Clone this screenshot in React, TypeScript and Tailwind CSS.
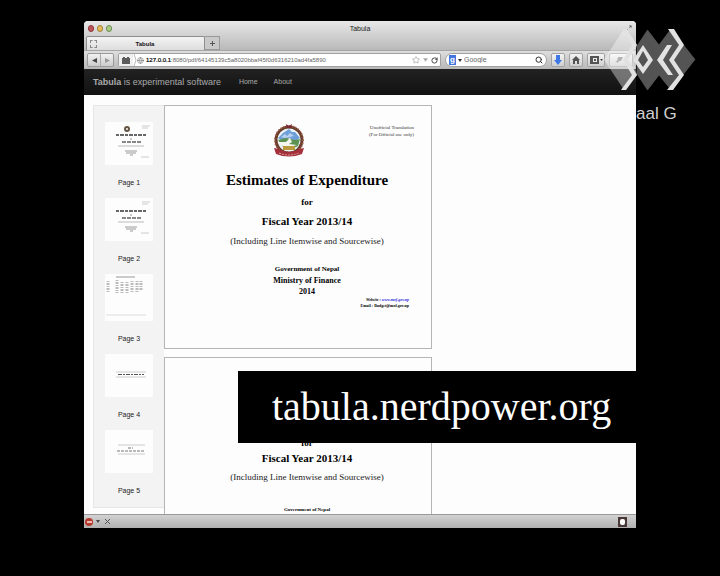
import React from "react";
import { Star, RotateCw, Search, Globe } from "lucide-react";

const SANS = "font-['Liberation_Sans',Arial,sans-serif]";
const SERIF = "font-['Liberation_Serif','Times_New_Roman',serif]";
const TOOL_BUTTON =
  "flex h-[14px] items-center justify-center gap-px rounded-xs border border-[#a3a3a3] bg-linear-to-b from-[#f4f4f4] to-[#cfcfcf]";

function Emblem() {
  return (
    <svg viewBox="0 0 32 34" className="h-[34px] w-8" aria-label="Emblem of Nepal">
      <circle cx="16" cy="16" r="12" fill="#eef3f8" />
      <path d="M5 14 L10 9 L13 7 L16 5 L19 8 L22 8 L27 14 L22 17 L16 14 L9 17Z" fill="#6f9fd8" />
      <path d="M8 13 L12 10 L14 12 L17 9 L21 12 L17 13 L12 14Z" fill="#b9d0ee" />
      <path d="M5 16 L13 14 L22 16 L27 15 L25 22 L19 25 L10 23Z" fill="#5c9350" />
      <path d="M5 18 L13 18 L17 14 L19 18 L16 20 L24 21 L13 24 L8 21Z" fill="#f4f6ee" />
      <rect x="10" y="22" width="12" height="4" fill="#b99a3c" />
      <circle cx="16" cy="16" r="13" fill="none" stroke="#6c3b2c" strokeWidth="3" />
      <circle cx="16" cy="16" r="14" fill="none" stroke="#a0604e" strokeWidth="2" strokeDasharray="1 2" />
      <circle cx="16" cy="16" r="12" fill="none" stroke="#4b5a2a" strokeWidth="1" strokeDasharray="1 3" />
      <path d="M1 24 L6 25 Q16 31 26 25 L31 24 L29 30 Q16 35 3 30Z" fill="#a3303a" />
      <path d="M6 29 Q16 33 26 29" fill="none" stroke="#d9a0a0" strokeWidth="1" strokeDasharray="2 1" />
      <path d="M13 0 L16 2 L19 0 L18 4 L14 4Z" fill="#7a2430" />
    </svg>
  );
}

function TabBar() {
  return (
    <header className="shrink-0 rounded-t-sm bg-linear-to-b from-[#e8e8e8] to-[#b9b9b9]">
      <div className="grid h-[15px] grid-cols-3 items-center px-1">
        <div className="flex gap-[3px]">
          <button aria-label="Close" className="h-[7px] w-[6px] rounded-full border border-[#8a3a3c] bg-[#c05458]" />
          <button aria-label="Minimise" className="h-[7px] w-[6px] rounded-full border border-[#a08038] bg-[#e6bd5c]" />
          <button aria-label="Zoom" className="h-[7px] w-[6px] rounded-full border border-[#6b8f50] bg-[#a9cb84]" />
        </div>
        <h1 className="text-center text-[7px] leading-[10px] text-[#222]">Tabula</h1>
        <button aria-label="Full screen" className="justify-self-end text-[#555]">
          <svg viewBox="0 0 8 8" className="size-[7px]" stroke="currentColor" fill="none">
            <path d="M5 1h2v2M7 1L5 3M1 5v2h2M1 7l2-2" />
          </svg>
        </button>
      </div>
      <div className="flex h-[14px] items-stretch pl-[2px]">
        <div className="flex w-[119px] items-center rounded-t-xs border border-b-0 border-[#8e8e8e] bg-linear-to-b from-[#f3f3f3] to-[#dddddd] px-[3px]">
          <span className="h-2 w-[7px] border border-dashed border-[#888]" />
          <span className="flex-1 pr-2 text-center text-[6px] leading-[8px] font-bold text-[#111]">Tabula</span>
        </div>
        <button aria-label="New tab" className="flex w-[15px] items-center justify-center border border-l-0 border-[#9a9a9a] bg-[#c9c9c9] text-[#555]">
          <svg viewBox="0 0 7 7" className="size-[7px]" stroke="currentColor"><path d="M3.5 1v5M1 3.500h5" /></svg>
        </button>
      </div>
    </header>
  );
}

function Toolbar() {
  return (
    <div className="flex h-[19px] shrink-0 items-center gap-1 border-t border-[#a5a5a5] bg-linear-to-b from-[#dedede] to-[#b8b8b8] px-[3px]">
      <div className="flex h-[14px] w-[27px] rounded-xs border border-[#9a9a9a] bg-linear-to-b from-[#f2f2f2] to-[#cccccc]">
        <button aria-label="Back" className="flex flex-1 items-center justify-center border-r border-[#aaa]">
          <svg viewBox="0 0 6 6" className="size-[5px]" fill="#444"><path d="M6 0v6L0 3z" /></svg>
        </button>
        <button aria-label="Forward" className="flex flex-1 items-center justify-center">
          <svg viewBox="0 0 6 6" className="size-[5px]" fill="#999"><path d="M0 0v6L6 3z" /></svg>
        </button>
      </div>
      <div className="flex h-[14px] min-w-0 flex-1 items-center rounded-xs border border-[#a0a0a0] bg-white pr-[2px]">
        <span className="flex h-full w-[14px] items-center justify-center bg-[#f0f0f0]">
          <svg viewBox="0 0 8 8" className="size-2" fill="#5c5c5c"><path d="M1 1h2v1h2V1h2v1h1v6H0V2h1z" /></svg>
        </span>
        <svg viewBox="0 0 4 12" className="h-3 w-1" fill="none" stroke="#bbb"><path d="M1 0l2 6-2 6" /></svg>
        <Globe className="mr-[2px] size-[7px] text-[#777]" />
        <label htmlFor="url" className="text-[6px] leading-[10px] text-black [-webkit-text-stroke:0.2px_black]">127.0.0.1</label>
        <input
          id="url"
          className="min-w-0 flex-1 text-[6px] leading-[10px] text-[#666] outline-none"
          defaultValue=":8080/pdf/64145139c5a8020bbaf45f0d6316210ad4fa5890"
        />
        <div className="flex items-center gap-[3px]">
          <Star className="size-2 text-[#999]" />
          <svg viewBox="0 0 6 4" className="h-1 w-[5px]" fill="#aaa"><path d="M0 0h6L3 4z" /></svg>
          <RotateCw className="size-[7px] text-[#333]" strokeWidth={3} />
        </div>
      </div>
      <div className="flex h-[14px] w-[102px] items-center gap-[2px] rounded-full border border-[#a0a0a0] bg-white px-[3px]">
        <span className="flex h-[10px] w-[7px] items-center justify-center bg-[#4474dd] text-[8px] leading-[8px] font-bold text-white">g</span>
        <svg viewBox="0 0 4 3" className="h-[3px] w-1" fill="#333"><path d="M0 0h4L2 3z" /></svg>
        <input aria-label="Search" placeholder="Google" className="min-w-0 flex-1 text-[7px] leading-[10px] outline-none placeholder:text-[#666]" />
        <Search className="size-2 text-[#333]" strokeWidth={3} />
      </div>
      <button aria-label="Downloads" className={TOOL_BUTTON + " w-[14px]"}>
        <svg viewBox="0 0 8 10" className="h-[10px] w-2" fill="#3e78e6"><path d="M2 0h4v5h2L4 10 0 5h2z" /></svg>
      </button>
      <button aria-label="Home" className={TOOL_BUTTON + " w-[14px]"}>
        <svg viewBox="0 0 8 8" className="size-2" fill="#555"><path d="M4 0l4 4H7v4H5V5H3v3H1V4H0z" /></svg>
      </button>
      <button aria-label="Bookmarks" className={TOOL_BUTTON + " w-[18px]"}>
        <svg viewBox="0 0 9 8" className="h-2 w-[9px]"><path d="M0 0h9v8H0z" fill="#555" /><path d="M3 2h4v4H3z" fill="#eee" /><path d="M4 3h2v2H4z" fill="#555" /></svg>
        <svg viewBox="0 0 4 3" className="h-[2px] w-[3px]" fill="#333"><path d="M0 0h4L2 3z" /></svg>
      </button>
      <button aria-label="Add-ons" className={TOOL_BUTTON + " w-[24px] gap-1"}>
        <svg viewBox="0 0 8 6" className="h-[6px] w-2" fill="#888"><path d="M3 0h5L6 4H4L3 6 0 4h2z" /></svg>
        <svg viewBox="0 0 4 3" className="h-[2px] w-[3px]" fill="#777"><path d="M0 0h4L2 3z" /></svg>
      </button>
    </div>
  );
}

function Lines({ kind }: { kind: number }) {
  return (
    <svg viewBox="0 0 48 43" className="w-full" fill="none" stroke="#888">
      {kind <= 2 && (
        <g>
          {kind === 1 && <circle cx="22" cy="7" r="2" stroke="#665544" strokeWidth="2" />}
          <path d="M37 4h8M37 6h6M36 35h8" stroke="#ccc" />
          <path d="M11 13h30" stroke="#666" strokeWidth="2" strokeDasharray="3 1 4 1" />
          <path d="M25 17h2" stroke="#999" />
          <path d="M17 20h19" stroke="#888" strokeWidth="2" strokeDasharray="4 1" />
          <path d="M13 24h26" stroke="#bbb" />
          <path d="M20 29h12M21 31h10M25 33h3" stroke="#999" />
        </g>
      )}
      {kind === 3 && (
        <g>
          <path d="M11 3h19" stroke="#999" />
          <path d="M3 7v11M12 6v13M17 8v11M22 8v11M27 7v12M32 7v12M36 7v10" stroke="#bbb" strokeWidth="3" strokeDasharray="1 1 2 1" />
          <path d="M1 41h40" stroke="#ddd" />
        </g>
      )}
      {kind === 4 && (
        <g>
          <path d="M11 18h30M11 23h30" stroke="#ccc" />
          <path d="M13 20.500h26" stroke="#555" strokeDasharray="4 1 2 1" />
        </g>
      )}
      {kind === 5 && (
        <g>
          <path d="M13 15h27M13 24h27" stroke="#ccc" />
          <path d="M23 18h5M12 21h28" stroke="#777" strokeDasharray="3 1" />
        </g>
      )}
    </svg>
  );
}

function Sidebar() {
  return (
    <nav aria-label="Pages" className="mb-[6px] w-[71px] shrink-0 self-stretch border border-r-0 border-[#e6e6e6] bg-[#f3f3f3] pt-4">
      <ul className="flex flex-col items-center gap-[9px]">
        {[1, 2, 3, 4, 5].map((n) => (
          <li key={n}>
            <a href={"#page-" + n} className="flex flex-col items-center gap-3">
              <span className={n === 3 ? "h-[47px] w-12 bg-[#fdfdfd]" : "h-[43px] w-12 bg-[#fdfdfd]"}>
                <Lines kind={n} />
              </span>
              <span className="text-[7px] leading-[12px] text-[#222]">Page {n}</span>
            </a>
          </li>
        ))}
      </ul>
    </nav>
  );
}

function DocumentPage({ first = false }: { first?: boolean }) {
  return (
    <article id={first ? "page-1" : "page-2"} className={"h-[244px] w-[268px] shrink-0 border border-[#b5b5b5] bg-[#fdfdfd] text-black " + SERIF}>
      {first && (
        <div className="flex h-16 justify-end pt-[18px] pr-[17px]">
          <span className="mr-[64px]"><Emblem /></span>
          <p className="text-right text-[5px] leading-[7px] text-[#333]">Unofficial Translation<br />(For Official use only)</p>
        </div>
      )}
      <div className={first ? "pl-[18px] text-center" : "pt-[73px] pl-[18px] text-center"}>
        {first && <h2 className="text-[15px] leading-[20px] font-bold">Estimates of Expenditure</h2>}
        <p className="pt-[6px] text-[9px] leading-[12px] font-bold">for</p>
        <h3 className={first ? "pt-[5px] text-[11px] leading-[16px] font-bold" : "pt-px text-[11px] leading-[16px] font-bold"}>Fiscal Year 2013/14</h3>
        <p className={first ? "pt-[6px] text-[9px] leading-[12px] text-[#222]" : "pt-[5px] text-[9px] leading-[12px] text-[#222]"}>(Including Line Itemwise and Sourcewise)</p>
        {first ? (
          <div className="pt-[17px] text-[8px] leading-[11px] font-bold">
            <p className="text-[7px]">Government of Nepal</p>
            <p>Ministry of Finance</p>
            <p>2014</p>
          </div>
        ) : (
          <p className="pt-[22px] text-[5px] leading-[10px] font-bold">Government of Nepal</p>
        )}
      </div>
      {first && (
        <div className="flex flex-col items-end pr-[22px] text-[4px] leading-[6px] font-bold">
          <p className="italic">Website : <a href="#website" className="text-[#2222dd]">www.mof.gov.np</a></p>
          <p>Email : Budget@mof.gov.np</p>
        </div>
      )}
    </article>
  );
}

function ChannelLogo() {
  return (
    <div className="absolute top-[28px] right-[24px] w-[92px]">
      <svg viewBox="604 28 92 63" className="block w-full" aria-label="Channel logo">
        <path d="M604 59.500L624 29 637 45 633 59.500 637 75 624 90z" fill="#fff" fillOpacity=".38" />
        <path d="M637 46L647.500 30 659 45 671 29 695 59.500 671 90 659 75 647.500 90 637 74z" fill="#545454" stroke="#666" strokeWidth=".5" />
        <g fill="#e2e2e2">
          <path d="M622 29H627L637 45 628 60 637 75 626 90H621L632 75 623 60 632 45z" />
          <path fillRule="evenodd" d="M643 45L653 60 643 74 633 60zM643 51L638 60 643 67 648 60z" />
          <path d="M667 45H672L663 60 673 75H668L657 60z" />
          <path d="M668 29H674L684 45 674 60 684 75 673 90H667L679 75 669 60 679 45z" />
        </g>
      </svg>
      <p className="pt-3 pl-8 text-[17px] leading-[22px] whitespace-nowrap text-[#d0d0d0]">aal G</p>
    </div>
  );
}

export default function App() {
  return (
    <main className={"relative flex h-screen flex-col bg-black px-[84px] pt-[21px] pb-12 " + SANS}>
      <section className="flex min-h-0 flex-1 flex-col overflow-hidden rounded-t-sm bg-[#fdfdfd]">
        <TabBar />
        <Toolbar />
        <nav className="flex h-[26px] shrink-0 items-center gap-4 bg-linear-to-b from-[#222] to-[#111] px-[9px] text-[7px] leading-[12px] text-[#aaa]">
          <a href="#home" className="mr-[2px] text-[9px]"><b>Tabula</b> is experimental software</a>
          <a href="#main">Home</a>
          <a href="#about">About</a>
        </nav>
        <div className="flex min-h-0 flex-1 pt-[10px] pl-[9px]">
          <Sidebar />
          <div className="flex flex-col gap-2 overflow-hidden">
            <DocumentPage first />
            <DocumentPage />
          </div>
        </div>
        <footer className="flex h-[14px] shrink-0 items-center gap-[3px] border-t border-[#999] bg-linear-to-b from-[#d2d2d2] to-[#b0b0b0] px-px">
          <button aria-label="Blocker" className="flex size-2 items-center justify-center rounded-full bg-[#b5382c]">
            <span className="h-[2px] w-[5px] bg-[#eebbb4]" />
          </button>
          <svg viewBox="0 0 4 3" className="h-[3px] w-1" fill="#444"><path d="M0 0h4L2 3z" /></svg>
          <button aria-label="Close bar" className="ml-[2px]">
            <svg viewBox="0 0 5 5" className="size-[5px]" stroke="#555"><path d="M0 0l5 5M5 0L0 5" /></svg>
          </button>
          <button aria-label="Extension" className="mr-2 ml-auto flex h-[10px] w-[9px] items-center justify-center bg-[#4a3838]">
            <span className="h-[6px] w-[5px] rounded-xs bg-white" />
          </button>
        </footer>
      </section>
      <div className={"absolute right-[75px] bottom-[133px] left-[238px] flex h-[72px] items-center bg-black pl-[34px] text-[40px] leading-[44px] text-white " + SERIF}>
        tabula.nerdpower.org
      </div>
      <ChannelLogo />
    </main>
  );
}
